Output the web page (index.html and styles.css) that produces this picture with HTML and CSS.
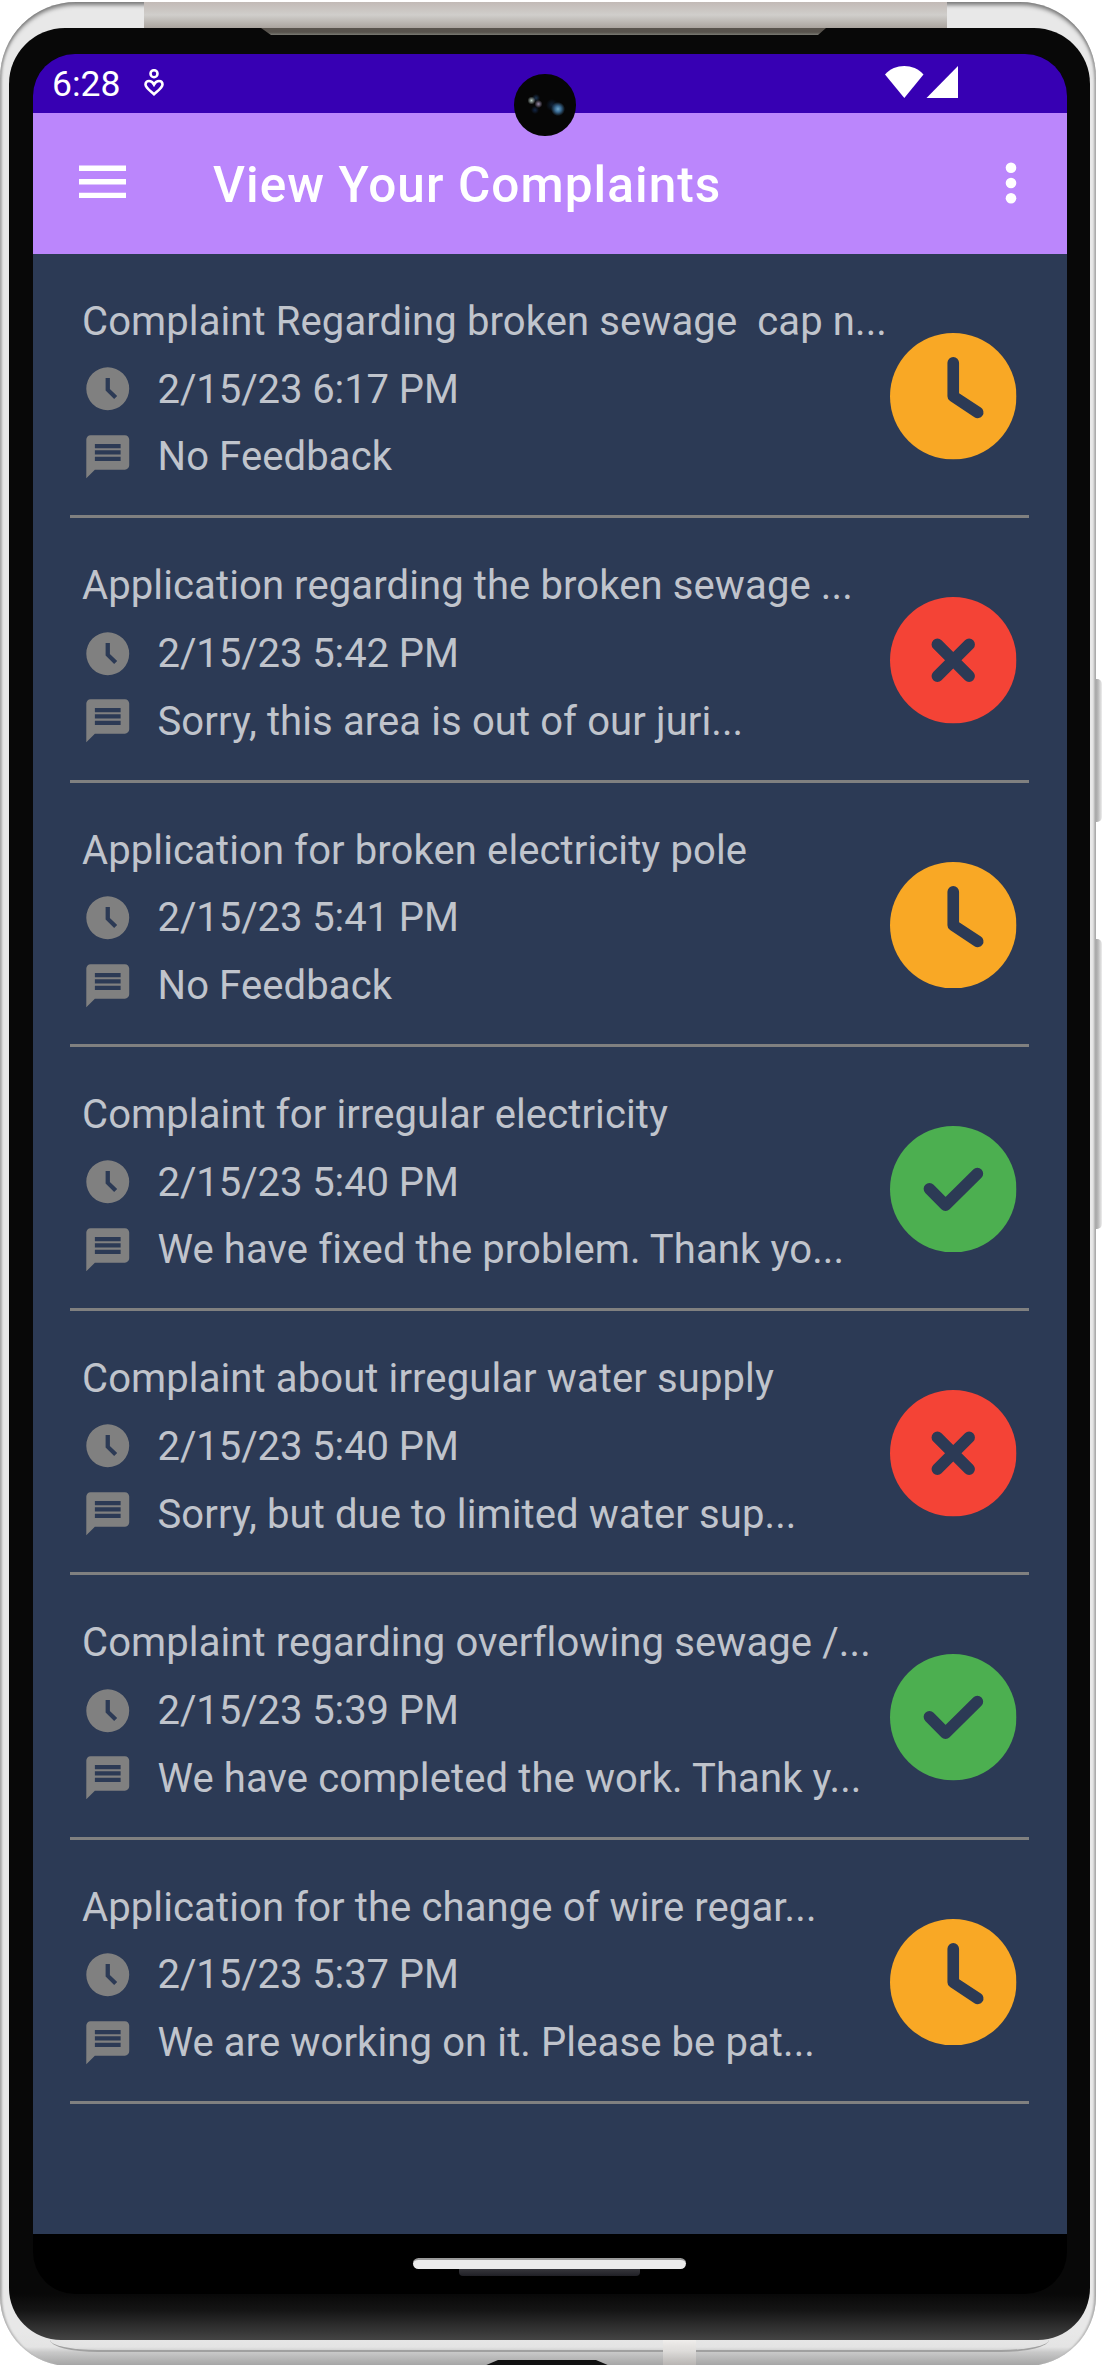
FILE: index.html
```
<!DOCTYPE html>
<html lang="en">
<head>
<meta charset="utf-8">
<title>View Your Complaints</title>
<link rel="stylesheet" href="styles.css">
</head>
<body>
<svg class="defs" aria-hidden="true">
  <symbol id="time" viewBox="0 0 24 24"><path fill-rule="evenodd" d="M12 2a10 10 0 1 0 0 20a10 10 0 0 0 0-20zM11 7h2v5.100l3.400 3.300-1.400 1.400-4-4z"/></symbol>
  <symbol id="chat" viewBox="0 0 24 24"><path fill-rule="evenodd" d="M20 2H4c-1.1 0-1.99.9-1.99 2L2 22l4-4h14c1.1 0 2-.9 2-2V4c0-1.1-.9-2-2-2zM6 9h12v2H6V9zm12 5H6v-2h12v2zm0-6H6V6h12v2z"/></symbol>
  <symbol id="pending" viewBox="0 0 126 126"><circle cx="63" cy="63" r="63" fill="#f9a825"/><path class="mark" stroke-linejoin="miter" d="M63 29.7V63l24.3 16"/></symbol>
  <symbol id="rejected" viewBox="0 0 126 126"><circle cx="63" cy="63" r="63" fill="#f44336"/><path class="mark" d="M47.2 47.2l31.6 31.6M78.8 47.2L47.2 78.8"/></symbol>
  <symbol id="done" viewBox="0 0 126 126"><circle cx="63" cy="63" r="63" fill="#4caf50"/><path class="mark" d="M39.3 62.6l16 16.2L87 47.5"/></symbol>
</svg>
<div class="phone">
  <span class="side-button power"></span>
  <span class="side-button volume"></span>
  <div class="shell">
    <span class="top-band"></span>
    <span class="chin-line"></span>
    <span class="antenna"></span>
    <span class="port"></span>
    <div class="bezel">
      <span class="speaker"></span>
      <span class="camera"></span>
      <div class="screen">
        <div class="status-bar">
          <span class="clock">6:28</span>
          <svg class="care" viewBox="0 0 20 27" fill="none" stroke="#fff" stroke-width="2.6"><circle cx="10" cy="4.700" r="3.500"/><path d="M10 25.200C5.600 21.300 1.500 18.600 1.500 15.500C1.500 13.300 3 12 5 12C7.200 12 8.900 13.500 10 15.500C11.100 13.500 12.800 12 15 12C17 12 18.500 13.300 18.500 15.500C18.500 18.600 14.400 21.300 10 25.200Z"/></svg>
          <svg class="signals" viewBox="0 0 74 32" fill="#fff"><path d="M0 8.500C10-2.800 28.500-2.800 38.500 8.500L19.300 32z"/><path d="M73 0v32H41.500z"/></svg>
        </div>
        <header class="app-bar">
          <svg class="menu" viewBox="0 0 47 34" fill="#fff"><path d="M0 .5h47v5.400H0zM0 14h47v5.600H0zM0 27.700h47v5.400H0z"/></svg>
          <h1 class="title">View Your Complaints</h1>
          <svg class="more" viewBox="0 0 12 42" fill="#fff"><circle cx="6" cy="5.800" r="5.300"/><circle cx="6" cy="21" r="5.300"/><circle cx="6" cy="36.200" r="5.300"/></svg>
        </header>
        <main class="list">
          <article class="item">
            <div class="info">
              <h2 class="line">Complaint Regarding broken sewage  cap n...</h2>
              <p class="line date"><svg class="icon"><use href="#time"/></svg>2/15/23 6:17 PM</p>
              <p class="line"><svg class="icon"><use href="#chat"/></svg>No Feedback</p>
            </div>
            <svg class="state"><use href="#pending"/></svg>
          </article>
          <article class="item">
            <div class="info">
              <h2 class="line">Application regarding the broken sewage ...</h2>
              <p class="line date"><svg class="icon"><use href="#time"/></svg>2/15/23 5:42 PM</p>
              <p class="line"><svg class="icon"><use href="#chat"/></svg>Sorry, this area is out of our juri...</p>
            </div>
            <svg class="state"><use href="#rejected"/></svg>
          </article>
          <article class="item">
            <div class="info">
              <h2 class="line">Application for broken electricity pole</h2>
              <p class="line date"><svg class="icon"><use href="#time"/></svg>2/15/23 5:41 PM</p>
              <p class="line"><svg class="icon"><use href="#chat"/></svg>No Feedback</p>
            </div>
            <svg class="state"><use href="#pending"/></svg>
          </article>
          <article class="item">
            <div class="info">
              <h2 class="line">Complaint for irregular electricity</h2>
              <p class="line date"><svg class="icon"><use href="#time"/></svg>2/15/23 5:40 PM</p>
              <p class="line"><svg class="icon"><use href="#chat"/></svg>We have fixed the problem. Thank yo...</p>
            </div>
            <svg class="state"><use href="#done"/></svg>
          </article>
          <article class="item">
            <div class="info">
              <h2 class="line">Complaint about irregular water supply</h2>
              <p class="line date"><svg class="icon"><use href="#time"/></svg>2/15/23 5:40 PM</p>
              <p class="line"><svg class="icon"><use href="#chat"/></svg>Sorry, but due to limited water sup...</p>
            </div>
            <svg class="state"><use href="#rejected"/></svg>
          </article>
          <article class="item">
            <div class="info">
              <h2 class="line">Complaint regarding overflowing sewage /...</h2>
              <p class="line date"><svg class="icon"><use href="#time"/></svg>2/15/23 5:39 PM</p>
              <p class="line"><svg class="icon"><use href="#chat"/></svg>We have completed the work. Thank y...</p>
            </div>
            <svg class="state"><use href="#done"/></svg>
          </article>
          <article class="item">
            <div class="info">
              <h2 class="line">Application for the change of wire regar...</h2>
              <p class="line date"><svg class="icon"><use href="#time"/></svg>2/15/23 5:37 PM</p>
              <p class="line"><svg class="icon"><use href="#chat"/></svg>We are working on it. Please be pat...</p>
            </div>
            <svg class="state"><use href="#pending"/></svg>
          </article>
        </main>
        <footer class="nav-bar">
          <span class="home"></span>
          <span class="home-shadow"></span>
        </footer>
      </div>
    </div>
  </div>
</div>
</body>
</html>
```
FILE: styles.css
```
* { box-sizing: border-box; }

body {
  margin: 0;
  background: #fff;
  font-family: Roboto, "Liberation Sans", sans-serif;
}

.defs { display: none; }

.mark {
  fill: none;
  stroke: #2c3a55;
  stroke-width: 11.6;
  stroke-linecap: round;
  stroke-linejoin: round;
}

/* Device frame */
.phone {
  position: relative;
  width: 1103px;
  height: 2365px;
  padding-top: 2px;
  overflow: hidden;
}

.shell {
  position: relative;
  width: 1096px;
  height: 2364px;
  padding: 26px 6px 0 9px;
  border-radius: 76px 76px 70px 70px;
  background: linear-gradient(#e8e8e8 0, #e8e8e8 2330px, #e4e4e4 2345px, #c9c9c9 2350px, #a3a3a3 2364px);
  box-shadow: inset 0 4px 4px -1px #777, inset 3px 0 2px -1px #bbb, inset -3px 0 2px -1px #bbb;
}

.top-band {
  position: absolute;
  left: 144px;
  top: 0;
  width: 803px;
  height: 26px;
  background: linear-gradient(#c2bab6, #d0cecb 50%, #aaa49e);
}

.bezel {
  position: relative;
  height: 2312px;
  padding: 26px 23.500px 0 23.500px;
  border-radius: 56px 56px 52px 52px;
  background: linear-gradient(#080808 2266px, #141414 2282px, #444 2312px);
}

.speaker {
  position: absolute;
  left: 252px;
  top: 0;
  width: 565px;
  height: 7px;
  background: linear-gradient(#58534d 60%, #7b7b74);
  clip-path: polygon(0 0, 100% 0, 557px 100%, 10px 100%);
}

.camera {
  position: absolute;
  left: 505px;
  top: 46px;
  width: 61.500px;
  height: 61.500px;
  border-radius: 50%;
  background:
    radial-gradient(circle at 17.500px 26.500px, #b9ccc6 0, transparent 4px),
    radial-gradient(circle at 24.500px 30px, #998ca8 0, transparent 4px),
    radial-gradient(circle at 22px 24px, #1b3450 0, transparent 4px),
    radial-gradient(circle at 21px 36px, #132645 0, transparent 4px),
    radial-gradient(circle at 44px 35px, #71a8c9 0, #3b6c95 3px, transparent 7px),
    radial-gradient(circle at 38px 31px, #0f2137 0, transparent 6px),
    #060606;
}

.side-button {
  position: absolute;
  left: 1095.500px;
  width: 6px;
  border-radius: 0 5px 5px 0;
  background: linear-gradient(90deg, #a8a8a8, #b8b8b8 35%, #eee);
}
.power { top: 679px; height: 143px; }
.volume { top: 939px; height: 290px; }

.chin-line {
  position: absolute;
  left: 50px;
  bottom: 14px;
  width: 999px;
  height: 20px;
  border-bottom: 2px solid #a0a0a0;
  border-radius: 0 0 48px 48px / 0 0 12px 12px;
}

.antenna {
  position: absolute;
  left: 663px;
  bottom: 0;
  width: 33px;
  height: 26px;
  background: linear-gradient(#efedeb, #dfdddb 40%, #b5b2b0);
}

.port {
  position: absolute;
  left: 484px;
  bottom: 0;
  width: 126px;
  height: 6px;
  background: #111;
  clip-path: polygon(14px 0, 112px 0, 100% 100%, 0 100%);
}

/* Screen */
.screen {
  display: flex;
  flex-direction: column;
  height: 2240px;
  border-radius: 42px;
  overflow: hidden;
  background: #000;
  color: #fff;
}

.status-bar {
  flex: none;
  display: flex;
  align-items: flex-start;
  height: 58.500px;
  padding: 12px 107.500px 0 19.500px;
  background: #3700b3;
}

.clock {
  width: 91.500px;
  font-size: 35.500px;
  line-height: 36px;
}

.care { width: 20px; height: 27px; margin-top: 3px; }
.signals { width: 74px; height: 32px; margin-left: auto; }

.app-bar {
  flex: none;
  display: flex;
  align-items: center;
  height: 141.500px;
  padding: 0 49.500px 0 46.500px;
  background: #bb86fc;
}

.menu { width: 47px; height: 34px; margin-top: -3px; }

.title {
  margin: 4px 0 0 87px;
  font-size: 49.500px;
  line-height: 60px;
  font-weight: 500;
  letter-spacing: 1.070px;
  white-space: nowrap;
}

.more { width: 12px; height: 42px; margin-left: auto; }

.list {
  flex: none;
  height: 1979.500px;
  padding: 0 37.500px;
  background: #2c3a55;
}

.item {
  display: flex;
  justify-content: space-between;
  height: 264.300px;
  padding: 34px 12.500px 0 12px;
  border-bottom: 3px solid #808080;
}

.info { width: 806px; }

.line {
  display: flex;
  align-items: center;
  height: 67.700px;
  margin: 0;
  font-size: 40px;
  line-height: 67.700px;
  font-weight: 400;
  letter-spacing: 0.110px;
  white-space: pre;
  color: #c0c4cc;
}

.date { letter-spacing: -0.080px; }

.icon {
  width: 51.500px;
  height: 51.500px;
  margin: -1px 24.500px 0 -0.500px;
  fill: #808080;
}

.state {
  flex: none;
  width: 126.500px;
  height: 126.500px;
  margin-top: 45px;
}

/* Gesture bar */
.nav-bar {
  flex: 1;
  display: flex;
  flex-direction: column;
  align-items: center;
  padding-top: 24.500px;
}

.home {
  width: 273px;
  height: 11px;
  border-top: 2px solid #999;
  border-radius: 6px;
  background: #ebebeb;
}

.home-shadow {
  width: 181px;
  height: 7px;
  border-radius: 0 0 4px 4px;
  background: linear-gradient(#36363b, #202026);
}
```
